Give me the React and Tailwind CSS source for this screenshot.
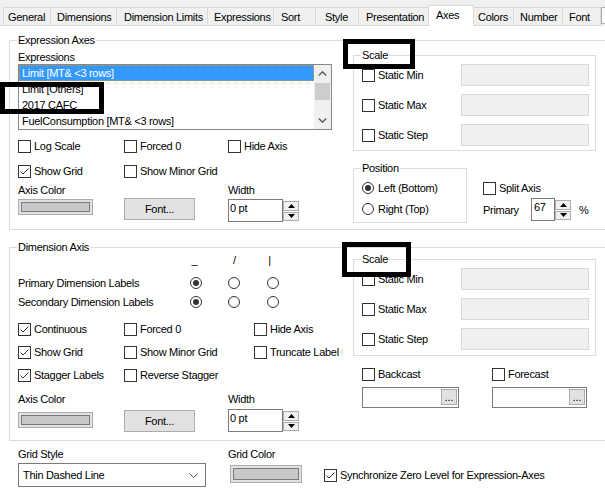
import React from 'react';

const tabs = [
  { label: 'General', cls: 'w-[47px] pl-[4px] border-l' },
  { label: 'Dimensions', cls: 'w-[66px] pl-[6px] border-l' },
  { label: 'Dimension Limits', cls: 'w-[91px] pl-[7px] border-l' },
  { label: 'Expressions', cls: 'w-[66px] pl-[6px] border-l' },
  { label: 'Sort', cls: 'w-[42px] pl-[7px] border-l' },
  { label: 'Style', cls: 'w-[43px] pl-[9px] border-l' },
  { label: 'Presentation', cls: 'w-[70px] pl-[7px] border-l' },
  { label: 'Axes', cls: 'w-[46px] pl-[7px]', active: true },
  { label: 'Colors', cls: 'w-[39px] pl-[4px]' },
  { label: 'Number', cls: 'w-[49px] pl-[6px] border-l' },
  { label: 'Font', cls: 'w-[39px] pl-[6px] border-l border-r' },
];

function TabStrip() {
  return (
    <div className="h-[26px] bg-[#f0f0f0] flex items-end">
      <div className="w-[3px] h-px bg-[#d9d9d9] shrink-0" />
      {tabs.map((t) =>
        t.active ? (
          <div key={t.label} className={`${t.cls} shrink-0 h-[21px] pt-[2px] whitespace-nowrap overflow-hidden bg-white border-t border-l border-r border-[#d9d9d9]`}>
            {t.label}
          </div>
        ) : (
          <div key={t.label} className={`${t.cls} shrink-0 h-[19px] pt-[2px] whitespace-nowrap overflow-hidden bg-[#f0f0f0] border-t border-b border-[#d9d9d9]`}>
            {t.label}
          </div>
        )
      )}
      <div className="shrink-0 mb-[2px] w-[20px] h-[17px] border border-[#adadad] bg-[#fafafa]" />
    </div>
  );
}

function Check({ label, checked }) {
  return (
    <div className="flex items-center gap-[3px] whitespace-nowrap">
      <span className="w-[13px] h-[13px] border border-[#333333] bg-white shrink-0 flex items-center justify-center">
        {checked && (
          <svg width="11" height="11" viewBox="0 0 11 11">
            <polyline points="1.5,5.5 4,8 9.5,2.5" fill="none" stroke="#333333" strokeWidth="1" />
          </svg>
        )}
      </span>
      <span>{label}</span>
    </div>
  );
}

function Radio({ label, checked }) {
  return (
    <div className="flex items-center gap-[4px] whitespace-nowrap">
      <span className="w-[12px] h-[12px] rounded-full border border-[#333333] bg-white shrink-0 flex items-center justify-center">
        {checked && <span className="w-[6px] h-[6px] rounded-full bg-[#333333]" />}
      </span>
      {label && <span>{label}</span>}
    </div>
  );
}

function Swatch({ className }) {
  return (
    <div className={`${className} border border-[#adadad] bg-[#e1e1e1] p-[2px] flex`}>
      <div className="flex-1 border border-[#7a7a7a] bg-[#c8c8c8]" />
    </div>
  );
}

const Up = () => (
  <svg width="7" height="4" viewBox="0 0 7 4">
    <polygon points="0,4 3.5,0 7,4" fill="#000" />
  </svg>
);
const Down = () => (
  <svg width="7" height="4" viewBox="0 0 7 4">
    <polygon points="0,0 7,0 3.5,4" fill="#000" />
  </svg>
);

function Spinner({ value, boxW, pl = 'pl-[1px]', className = '' }) {
  return (
    <div className={`flex h-[23px] ${className}`}>
      <div className={`${boxW} h-full border border-[#7a7a7a] bg-white pt-px ${pl}`}>{value}</div>
      <div className="w-[17px] h-full flex flex-col gap-[1px] pt-[2px] pb-[1px] pr-px">
        <div className="flex-1 border border-[#adadad] bg-[#f0f0f0] flex items-center justify-center">
          <Up />
        </div>
        <div className="flex-1 border border-[#adadad] bg-[#f0f0f0] flex items-center justify-center">
          <Down />
        </div>
      </div>
    </div>
  );
}

function Chevron({ up }) {
  return (
    <svg width="9" height="5" viewBox="0 0 9 5">
      <polyline points={up ? '0.8,4.5 4.5,0.8 8.2,4.5' : '0.8,0.5 4.5,4.2 8.2,0.5'} fill="none" stroke="#606060" strokeWidth="1.5" />
    </svg>
  );
}

function ListBox() {
  const items = ['Limit [MT& <3 rows]', 'Limit [Others]', '2017 CAFC', 'FuelConsumption [MT& <3 rows]'];
  return (
    <div className="h-[66px] border border-[#828790] bg-white flex overflow-hidden">
      <div className="flex-1 min-w-0">
        {items.map((it, i) =>
          i === 0 ? (
            <div key={it} className="h-[16px] pl-[2px] whitespace-nowrap bg-[#3399ff] text-white border border-dotted border-[#e0913b]">
              {it}
            </div>
          ) : (
            <div key={it} className="h-[16px] leading-[16px] pl-[3px] whitespace-nowrap">
              {it}
            </div>
          )
        )}
      </div>
      <div className="w-[17px] shrink-0 bg-[#f0f0f0] flex flex-col">
        <div className="h-[17px] flex items-center justify-center">
          <Chevron up />
        </div>
        <div className="mt-px mx-px h-[17px] bg-[#cdcdcd]" />
        <div className="flex-1" />
        <div className="h-[17px] flex items-center justify-center">
          <Chevron />
        </div>
      </div>
    </div>
  );
}

function Group({ title, className = '', children }) {
  return (
    <fieldset className={`min-w-0 border border-[#dcdcdc] pl-[8px] ${className}`}>
      <legend className="-ml-px px-px">{title}</legend>
      {children}
    </fieldset>
  );
}

function ScaleGroup({ className }) {
  return (
    <Group title="Scale" className={`w-[243px] pr-[6px] ${className}`}>
      <div className="mt-[2px] flex flex-col gap-[8px]">
        {['Static Min', 'Static Max', 'Static Step'].map((l) => (
          <div key={l} className="h-[22px] flex items-center justify-between">
            <Check label={l} />
            <div className="w-[128px] h-[22px] border border-[#d9d9d9] bg-[#f0f0f0]" />
          </div>
        ))}
      </div>
    </Group>
  );
}

function PickBox({ className }) {
  return (
    <div className={`${className} h-[21px] border border-[#7a7a7a] bg-white flex justify-end pt-px pr-px`}>
      <div className="w-[16px] h-[16px] border border-[#adadad] bg-[#e1e1e1] flex items-end justify-center text-[11px] leading-[11px] pb-[1px] tracking-normal">
        ...
      </div>
    </div>
  );
}

function ExpressionAxes() {
  return (
    <Group title="Expression Axes" className="mt-[7px] w-[620px] h-[197px]">
      <div className="flex">
        <div className="w-[314px] pt-[3px]">
          <div className="h-[14px]">Expressions</div>
          <ListBox />
          <div className="mt-[7px] h-[18px] flex items-center">
            <div className="w-[106px]"><Check label="Log Scale" /></div>
            <div className="w-[104px]"><Check label="Forced 0" /></div>
            <Check label="Hide Axis" />
          </div>
          <div className="mt-[7px] h-[18px] flex items-center">
            <div className="w-[106px]"><Check label="Show Grid" checked /></div>
            <Check label="Show Minor Grid" />
          </div>
          <div className="mt-[3px] h-[14px] flex">
            <div className="w-[210px]">Axis Color</div>
            <div>Width</div>
          </div>
          <div className="h-[25px] flex items-start">
            <Swatch className="mt-[2px] w-[75px] h-[16px]" />
            <div className="ml-[31px] mt-px w-[71px] h-[22px] border border-[#adadad] bg-[#e1e1e1] flex items-center justify-center">Font...</div>
            <Spinner className="ml-[33px] mt-[2px]" value="0 pt" boxW="w-[55px]" />
          </div>
        </div>
        <div className="ml-[21px] w-[243px] pt-px">
          <ScaleGroup className="h-[103px]" />
          <div className="mt-[10px] flex">
            <Group title="Position" className="w-[114px] h-[62px]">
              <div className="mt-[2px]">
                <div className="h-[21px] flex items-center"><Radio label="Left (Bottom)" checked /></div>
                <div className="h-[21px] flex items-center"><Radio label="Right (Top)" /></div>
              </div>
            </Group>
            <div className="ml-[16px] pt-[17px]">
              <div className="h-[20px] flex items-center"><Check label="Split Axis" /></div>
              <div className="h-[23px] flex items-center">
                <span className="w-[48px]">Primary</span>
                <Spinner value="67" boxW="w-[24px]" pl="pl-[2px]" />
                <span className="ml-[7px]">%</span>
              </div>
            </div>
          </div>
        </div>
      </div>
    </Group>
  );
}

function DimensionAxis() {
  return (
    <Group title="Dimension Axis" className="mt-[10px] w-[620px] h-[201px]">
      <div className="flex">
        <div className="w-[335px]">
          <div className="-mt-[1px] h-[14px] flex">
            <span className="w-[170px]" />
            <span className="w-[13px] text-center">_</span>
            <span className="ml-[27px] w-[13px] text-center">/</span>
            <span className="ml-[22px] w-[13px] text-center">|</span>
          </div>
          <div className="mt-[6px] h-[19px] flex items-center">
            <span className="w-[172px]">Primary Dimension Labels</span>
            <Radio checked />
            <div className="ml-[26px]"><Radio /></div>
            <div className="ml-[27px]"><Radio /></div>
          </div>
          <div className="h-[19px] flex items-center">
            <span className="w-[172px]">Secondary Dimension Labels</span>
            <Radio checked />
            <div className="ml-[26px]"><Radio /></div>
            <div className="ml-[27px]"><Radio /></div>
          </div>
          <div className="mt-[9px] h-[18px] flex items-center">
            <div className="w-[106px]"><Check label="Continuous" checked /></div>
            <div className="w-[130px]"><Check label="Forced 0" /></div>
            <Check label="Hide Axis" />
          </div>
          <div className="mt-[5px] h-[18px] flex items-center">
            <div className="w-[106px]"><Check label="Show Grid" checked /></div>
            <div className="w-[130px]"><Check label="Show Minor Grid" /></div>
            <Check label="Truncate Label" />
          </div>
          <div className="mt-[5px] h-[18px] flex items-center">
            <div className="w-[106px]"><Check label="Stagger Labels" checked /></div>
            <Check label="Reverse Stagger" />
          </div>
          <div className="mt-[8px] h-[14px] flex">
            <div className="w-[210px]">Axis Color</div>
            <div>Width</div>
          </div>
          <div className="mt-[3px] h-[23px] flex items-start">
            <Swatch className="mt-[3px] w-[75px] h-[16px]" />
            <div className="ml-[31px] mt-px w-[71px] h-[22px] border border-[#adadad] bg-[#e1e1e1] flex items-center justify-center">Font...</div>
            <Spinner className="ml-[33px]" value="0 pt" boxW="w-[55px]" />
          </div>
        </div>
        <div className="w-[243px] -mt-[2px]">
          <ScaleGroup className="h-[104px]" />
          <div className="mt-[9px] pl-[9px] h-[18px] flex items-center">
            <div className="w-[130px]"><Check label="Backcast" /></div>
            <Check label="Forecast" />
          </div>
          <div className="mt-[4px] pl-[9px] flex">
            <PickBox className="w-[97px]" />
            <PickBox className="ml-[33px] w-[95px]" />
          </div>
        </div>
      </div>
    </Group>
  );
}

function GridRow() {
  return (
    <div className="ml-[9px] mt-[6px] flex">
      <div className="w-[210px]">
        <div className="h-[14px]">Grid Style</div>
        <div className="mt-[2px] w-[188px] h-[24px] border border-[#7a7a7a] bg-white flex items-center justify-between pl-[4px] pr-[7px]">
          <span>Thin Dashed Line</span>
          <svg width="9" height="5" viewBox="0 0 9 5">
            <polyline points="0.5,0.5 4.5,4.5 8.5,0.5" fill="none" stroke="#555555" strokeWidth="1" />
          </svg>
        </div>
      </div>
      <div className="w-[96px]">
        <div className="h-[14px]">Grid Color</div>
        <Swatch className="mt-[4px] ml-[2px] w-[72px] h-[18px]" />
      </div>
      <div className="mt-[19px] h-[18px] flex items-center">
        <Check label="Synchronize Zero Level for Expression-Axes" checked />
      </div>
    </div>
  );
}

export default function App() {
  return (
    <div className="relative w-[605px] h-[491px] overflow-hidden bg-white text-[11px] leading-[14px] tracking-[-0.3px] text-black font-['Liberation_Sans',Arial,sans-serif]">
      <TabStrip />
      <div className="pl-[9px]">
        <ExpressionAxes />
        <DimensionAxis />
        <GridRow />
      </div>
      {/* annotation frames drawn over the dialog */}
      <div className="absolute left-0 top-[82px] w-[104px] h-[32px] border-[5px] border-black" />
      <div className="absolute left-[343px] top-[39px] w-[72px] h-[30px] border-[5px] border-black" />
      <div className="absolute left-[342px] top-[242px] w-[69px] h-[35px] border-[5px] border-black" />
    </div>
  );
}
